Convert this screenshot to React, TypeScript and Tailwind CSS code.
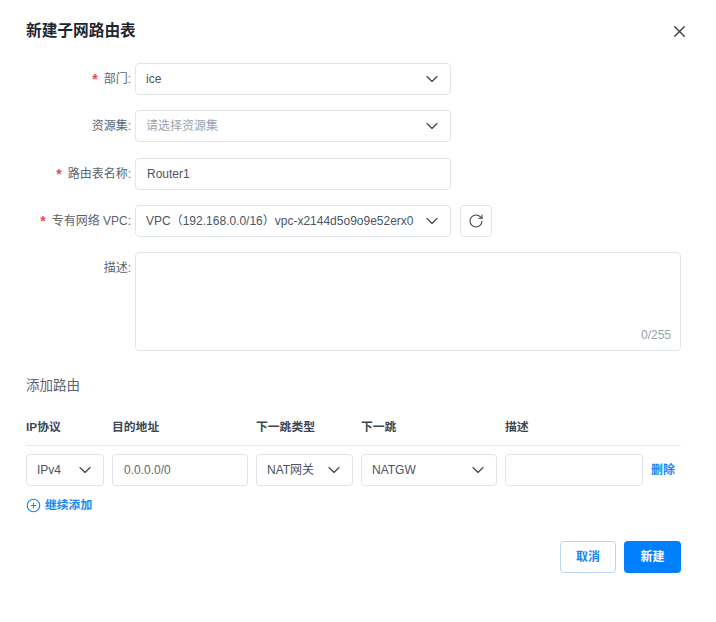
import { ChevronDown, RotateCw, X, CirclePlus } from "lucide-react";

const font = "font-['Liberation_Sans','Noto_Sans_CJK_SC',sans-serif]";

function Select({ text, placeholder, className }: { text: string; placeholder?: boolean; className: string }) {
  return (
    <div className={`flex h-8 items-center justify-between rounded border border-[#e1e5ea] bg-white pl-[10px] pr-2 ${className}`}>
      <span className={`whitespace-nowrap text-xs ${placeholder ? "text-[#9aa2ad]" : "text-[#4b5563]"}`}>{text}</span>
      <ChevronDown size={20} strokeWidth={1.4} className="shrink-0 text-[#3d4653]" />
    </div>
  );
}

function Input({ text, className }: { text?: string; className: string }) {
  return (
    <div className={`flex h-8 items-center rounded border border-[#e1e5ea] bg-white pl-[11px] text-xs ${className}`}>
      {text}
    </div>
  );
}

function Field({ label, required, className, children }: { label: string; required?: boolean; className?: string; children: React.ReactNode }) {
  return (
    <div className={`flex items-start gap-1 ${className ?? ""}`}>
      <label className="flex h-8 w-[105px] items-center justify-end whitespace-nowrap text-xs text-[#5b6470]">
        {required && <span className="mr-[6px] text-sm font-bold leading-none text-[#e5484d]">*</span>}
        {label}:
      </label>
      {children}
    </div>
  );
}

export default function App() {
  return (
    <div className={`h-[622px] w-[716px] bg-white px-[26px] pt-[21px] ${font}`}>
      <div className="flex h-5 items-center justify-between">
        <h2 className="text-[15.7px] font-bold text-[#1f2733]">新建子网路由表</h2>
        <X size={19} strokeWidth={1.6} className="mr-[1.5px] text-[#2b3440]" />
      </div>

      <Field label="部门" required className="mt-[22px]">
        <Select text="ice" className="w-[316px]" />
      </Field>
      <Field label="资源集" className="mt-[15px]">
        <Select text="请选择资源集" placeholder className="w-[316px]" />
      </Field>
      <Field label="路由表名称" required className="mt-[16px]">
        <Input text="Router1" className="w-[316px] text-[#4b5563]" />
      </Field>
      <Field label="专有网络 VPC" required className="mt-[15px]">
        <Select text="VPC（192.168.0.0/16）vpc-x2144d5o9o9e52erx0" className="w-[316px]" />
        <div className="ml-[5px] flex size-8 items-center justify-center rounded border border-[#e1e5ea]">
          <RotateCw size={16} strokeWidth={1.6} className="text-[#3d4653]" />
        </div>
      </Field>
      <Field label="描述" className="mt-[15px]">
        <div className="relative h-[99px] w-[546px] rounded border border-[#e1e5ea]">
          <span className="absolute bottom-[7px] right-[9px] text-xs text-[#9aa2ad]">0/255</span>
        </div>
      </Field>

      <h3 className="mt-[27px] text-[13.5px] leading-4 text-[#5b6470]">添加路由</h3>

      <div className="mt-[25px] grid w-[655px] grid-cols-[78px_136px_97px_136px_138px_auto] gap-x-2 border-b border-[#e8ebef] pb-[10px] text-[11.8px] font-bold leading-4 text-[#3d4653]">
        <span>IP协议</span>
        <span>目的地址</span>
        <span>下一跳类型</span>
        <span>下一跳</span>
        <span>描述</span>
      </div>

      <div className="mt-2 grid w-[655px] grid-cols-[78px_136px_97px_136px_138px_auto] items-center gap-x-2">
        <Select text="IPv4" className="" />
        <Input text="0.0.0.0/0" className="text-[#5f6875]" />
        <Select text="NAT网关" className="" />
        <Select text="NATGW" className="" />
        <Input className="" />
        <span className="whitespace-nowrap text-xs font-bold text-[#1a86f0]">删除</span>
      </div>

      <div className="mt-[11px] flex items-center gap-1 text-[11.8px] font-bold leading-4 text-[#1a86f0]">
        <CirclePlus size={15} strokeWidth={1.8} />
        继续添加
      </div>

      <div className="mt-[28px] flex w-[655px] justify-end gap-2">
        <button type="button" className="h-8 w-[56px] rounded border border-[#b7d6f5] bg-white text-xs font-bold text-[#1a86f0]">取消</button>
        <button type="button" className="h-8 w-[57px] rounded bg-[#0080ff] text-xs font-bold text-white">新建</button>
      </div>
    </div>
  );
}
